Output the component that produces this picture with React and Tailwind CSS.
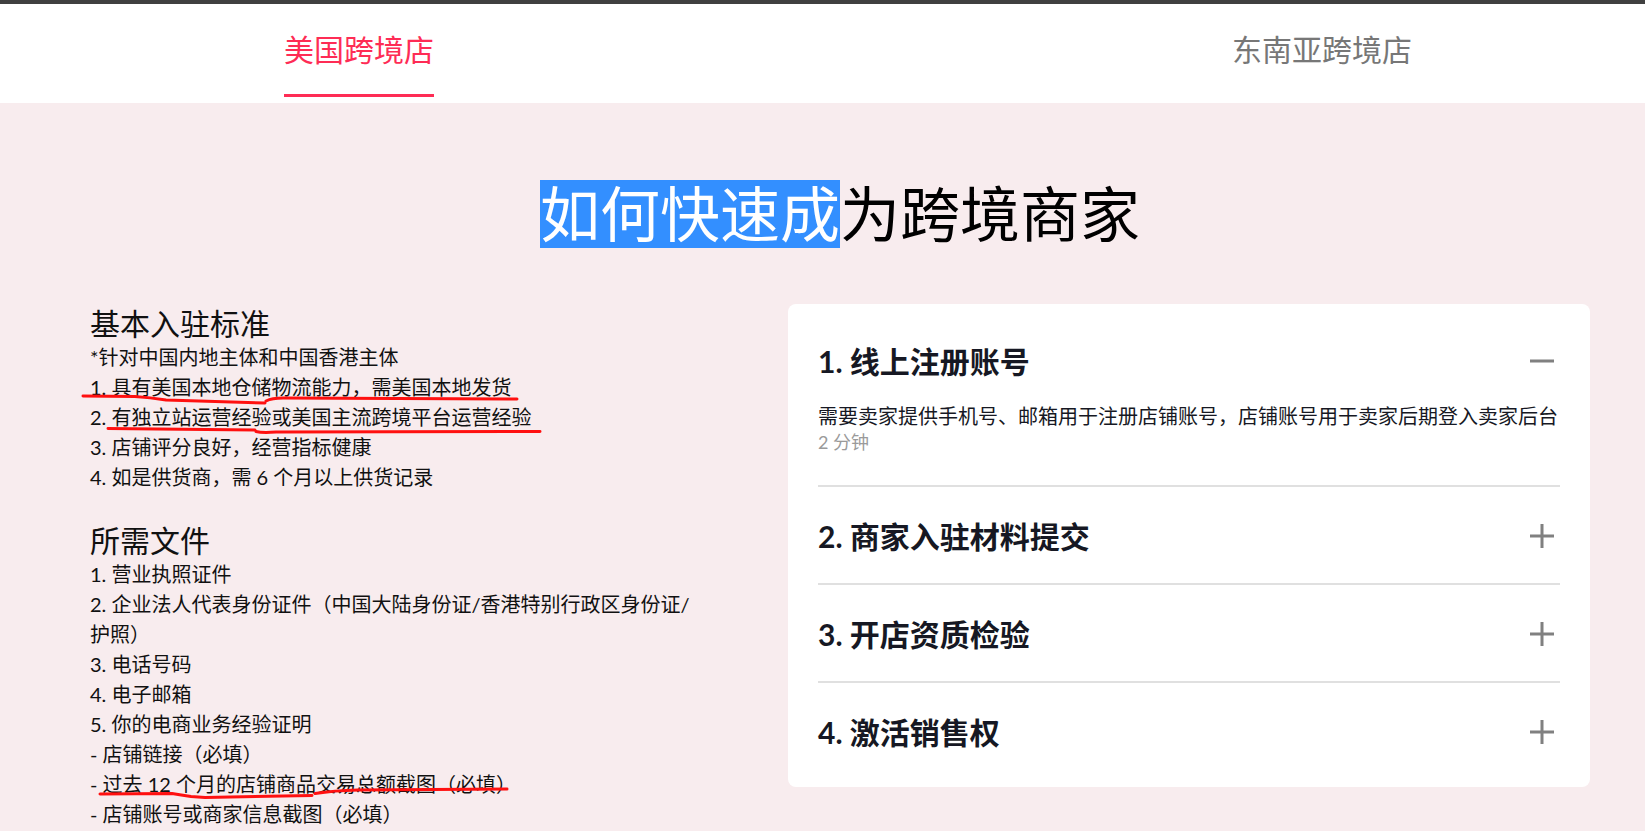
import { useState } from "react"

const basics = [
  "*针对中国内地主体和中国香港主体",
  "1. 具有美国本地仓储物流能力，需美国本地发货",
  "2. 有独立站运营经验或美国主流跨境平台运营经验",
  "3. 店铺评分良好，经营指标健康",
  "4. 如是供货商，需 6 个月以上供货记录",
]

const docs = [
  "1. 营业执照证件",
  "2. 企业法人代表身份证件（中国大陆身份证/香港特别行政区身份证/护照）",
  "3. 电话号码",
  "4. 电子邮箱",
  "5. 你的电商业务经验证明",
  "- 店铺链接（必填）",
  "- 过去 12 个月的店铺商品交易总额截图（必填）",
  "- 店铺账号或商家信息截图（必填）",
]

const steps = [
  {
    title: "1. 线上注册账号",
    body: "需要卖家提供手机号、邮箱用于注册店铺账号，店铺账号用于卖家后期登入卖家后台",
    time: "2 分钟",
  },
  { title: "2. 商家入驻材料提交" },
  { title: "3. 开店资质检验" },
  { title: "4. 激活销售权" },
]

function Tab({ label, active }) {
  return (
    <div className="flex flex-col pt-[25px]">
      <span className={active ? "text-[30px] leading-[40px] text-[#fe2c55]" : "text-[30px] leading-[40px] text-[#777777]"}>
        {label}
      </span>
      <div className={active ? "mt-[25px] h-[3px] bg-[#fe2c55]" : "mt-[25px] h-[3px]"} />
    </div>
  )
}

function ToggleIcon({ open }) {
  return (
    <svg width="24" height="24" viewBox="0 0 24 24" className="mr-[6px] shrink-0">
      <rect x="0" y="10.5" width="24" height="3" fill="#808080" />
      {!open && <rect x="10.5" y="0" width="3" height="24" fill="#808080" />}
    </svg>
  )
}

function Step({ step, open, last, onToggle }) {
  return (
    <div className={last ? "" : "border-b-2 border-[#e0e0e0]"}>
      <button
        type="button"
        onClick={onToggle}
        className="flex w-full items-center justify-between pt-[30px] text-left"
      >
        <span className="text-[30px] font-bold leading-[38px] text-[#161823]">{step.title}</span>
        <ToggleIcon open={open} />
      </button>
      {open && step.body ? (
        <div className="pb-[31px]">
          <p className="mt-[21px] whitespace-nowrap text-[20px] leading-[30px] text-[#161823]">{step.body}</p>
          <p className="text-[18px] leading-[23px] text-[#9a9a9a]">{step.time}</p>
        </div>
      ) : (
        <div className="pb-[28px]" />
      )}
    </div>
  )
}

export default function App() {
  const [openStep, setOpenStep] = useState(0)

  return (
    <div className="relative min-h-screen overflow-hidden bg-[#f8ecee] font-['Lato','Noto_Sans_CJK_SC',sans-serif]">
      <div className="h-[4px] bg-[#404040]" />
      <header className="flex h-[99px] justify-between bg-white pl-[284px] pr-[233px]">
        <Tab label="美国跨境店" active />
        <Tab label="东南亚跨境店" />
      </header>

      <h1 className="pl-[35px] pt-[77px] text-center text-[60px] font-normal leading-[68px] text-black">
        <span className="inline-block h-[68px] bg-[#338fff] text-white">如何快速成</span>为跨境商家
      </h1>

      <main className="mt-[56px] flex items-start pl-[90px] pr-[55px]">
        <div className="mt-[2px] w-[605px] shrink-0 text-[#111111]">
          <h2 className="text-[30px] leading-[34px]">基本入驻标准</h2>
          <ul className="mt-[2px] text-[20px] leading-[30px]">
            {basics.map((line) => (
              <li key={line}>{line}</li>
            ))}
          </ul>
          <h2 className="mt-[31px] text-[30px] leading-[34px]">所需文件</h2>
          <ul className="mt-[2px] text-[20px] leading-[30px]">
            {docs.map((line) => (
              <li key={line}>{line}</li>
            ))}
          </ul>
        </div>

        <div className="ml-auto w-[802px] shrink-0 rounded-[8px] bg-white px-[30px] py-[8px]">
          {steps.map((step, i) => (
            <Step
              key={step.title}
              step={step}
              open={openStep === i}
              last={i === steps.length - 1}
              onToggle={() => setOpenStep(openStep === i ? -1 : i)}
            />
          ))}
        </div>
      </main>

      {/* hand-drawn red marks over the requirements */}
      <svg
        className="pointer-events-none absolute left-0 top-0"
        width="1645"
        height="831"
        fill="none"
        stroke="#ff1010"
        strokeWidth="3"
        strokeLinecap="round"
        strokeLinejoin="round"
      >
        <path d="M83 396 L135 396.5 Q150 397.5 166 400 L265 403" />
        <path d="M266 401 Q272 398 283 398 L517 399" />
        <path d="M108 428.5 L255 430" />
        <path d="M256 431.5 Q262 433 276 432 L540 431.5" />
        <path d="M100 794 L172 793.5 Q181 795 191 796.5 L205 797.5 L312 795.5" />
        <path d="M315 793.5 Q334 790.5 358 790 L507 789" />
      </svg>
    </div>
  )
}
